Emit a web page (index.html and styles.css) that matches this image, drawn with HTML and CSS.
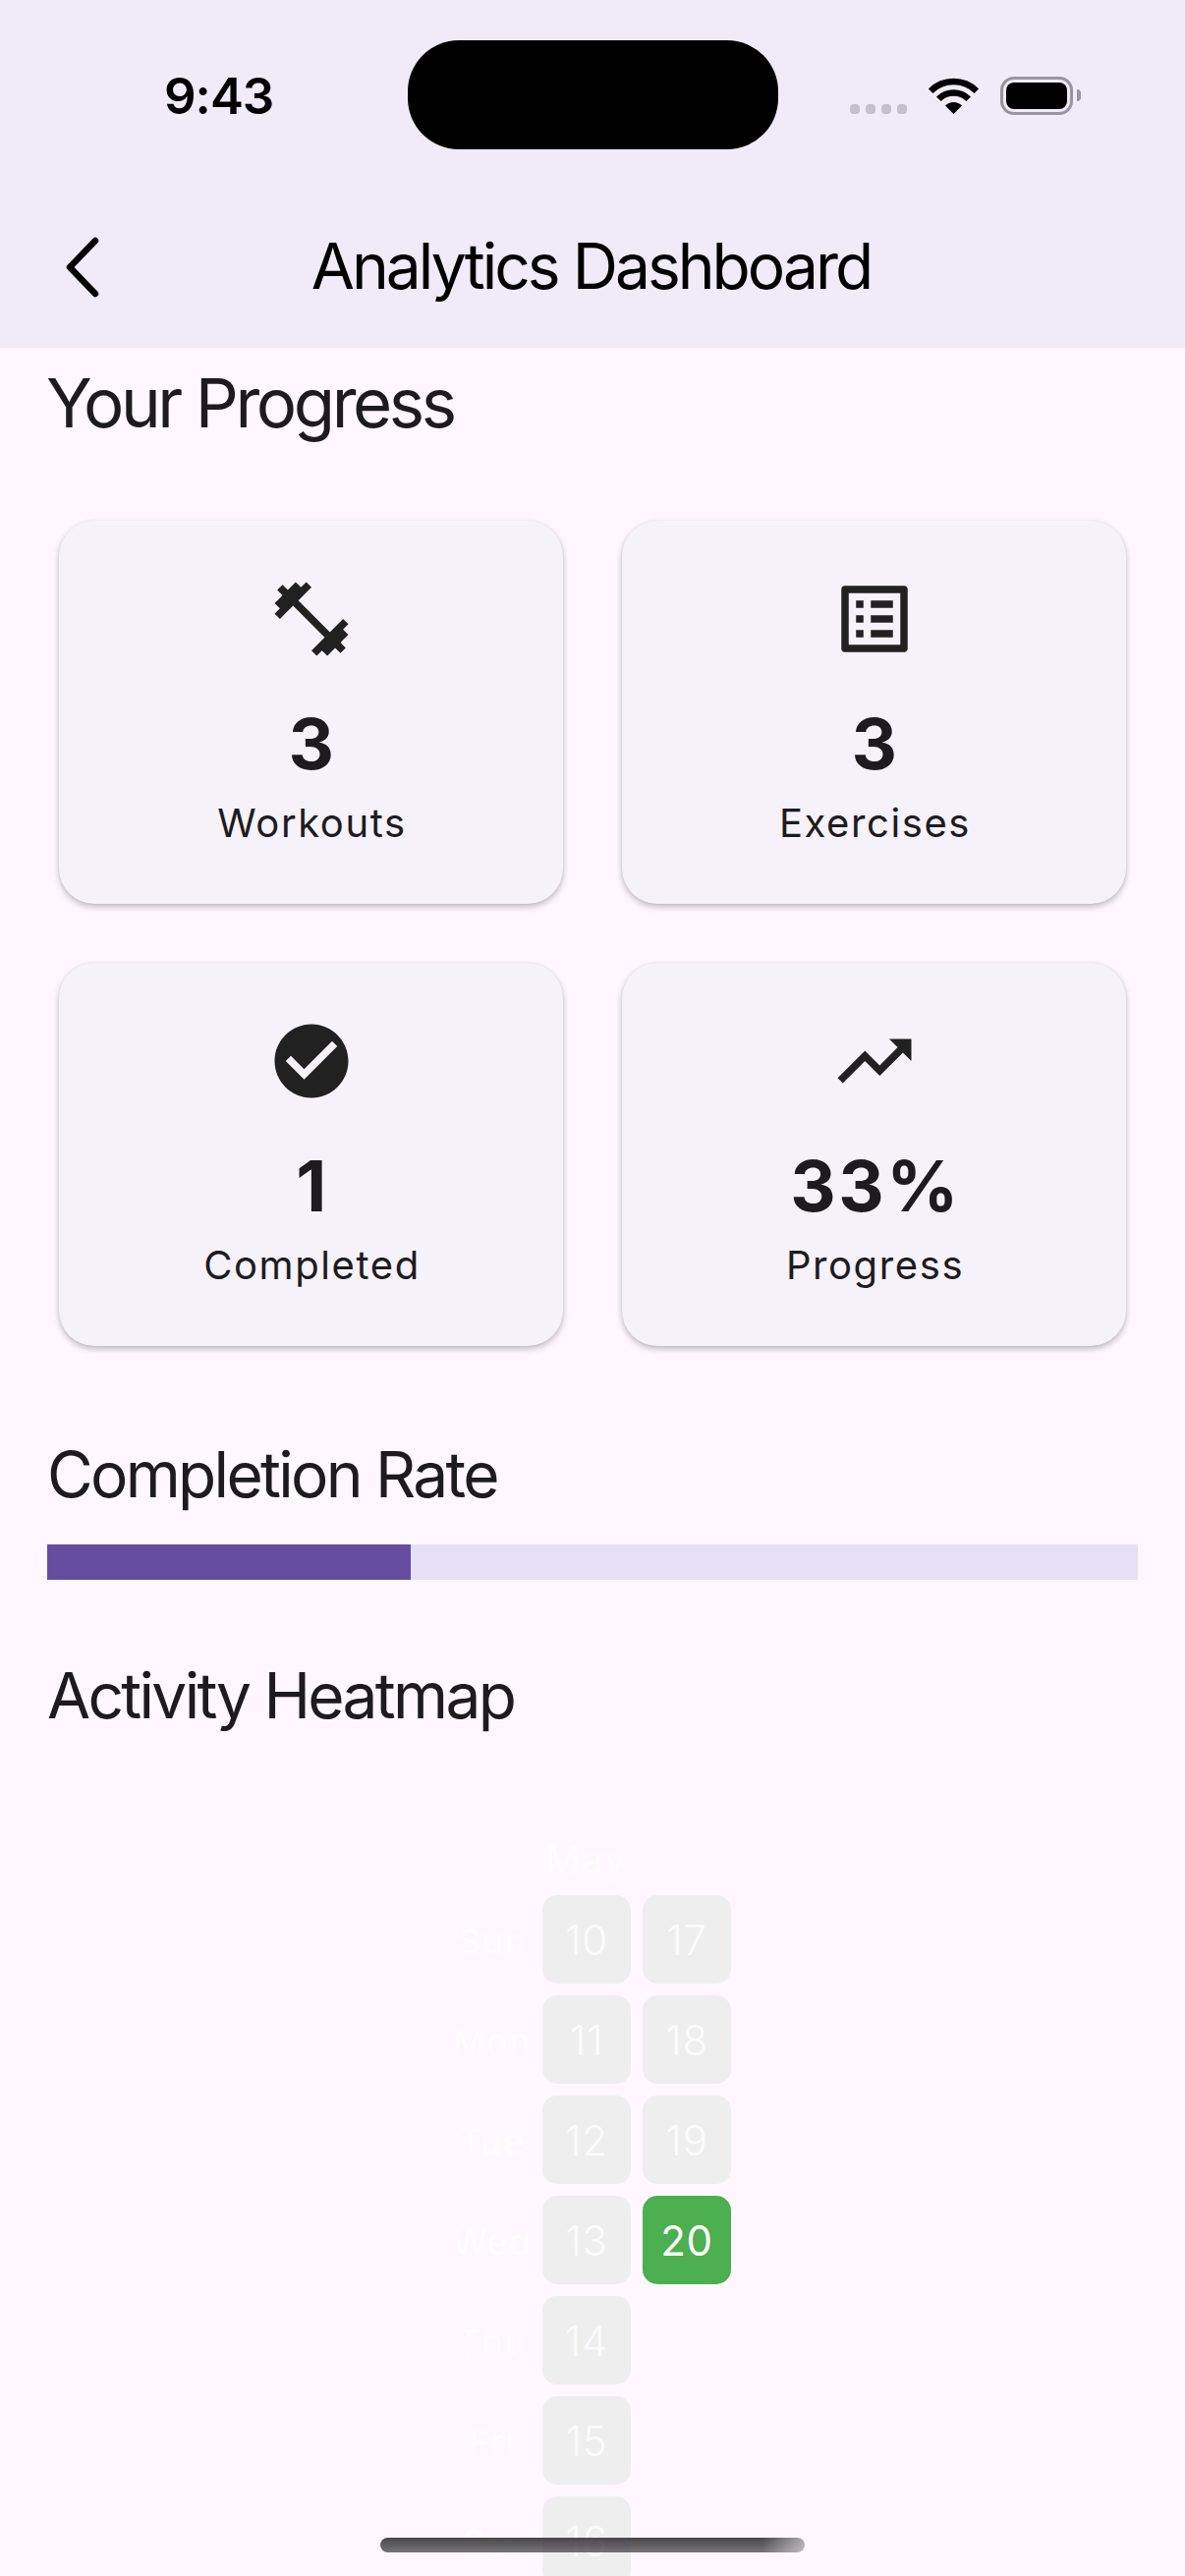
FILE: index.html
```html
<!DOCTYPE html>
<html lang="en">
<head>
<meta charset="utf-8">
<title>Analytics Dashboard</title>
<link rel="stylesheet" href="styles.css">
</head>
<body>
<div class="phone">
  <header class="top">
    <div class="status">
      <span class="clock">9:43</span>
      <div class="status-icons">
        <div class="signal"><i></i><i></i><i></i><i></i></div>
        <svg class="wifi" width="51" height="37" viewBox="0 0 51 37"><path d="M2.2 13.7A33 33 0 0 1 48.8 13.7" fill="none" stroke="#000" stroke-width="6.5"/><path d="M10.3 21.8A21.5 21.5 0 0 1 40.7 21.8" fill="none" stroke="#000" stroke-width="6.5"/><path d="M25.5 37L17 28.5A12 12 0 0 1 34 28.5Z"/></svg>
        <div class="battery"><div class="battery-level"></div></div>
        <div class="battery-nub"></div>
      </div>
    </div>
    <div class="island"></div>
    <div class="appbar">
      <svg class="back" width="40" height="64" viewBox="0 0 40 64"><path d="M31 5L5 32L31 59" fill="none" stroke="#000" stroke-width="6.5" stroke-linecap="round" stroke-linejoin="round"/></svg>
      <h1 class="title">Analytics Dashboard</h1>
    </div>
  </header>
  <main class="content">
    <h2 class="h-large">Your Progress</h2>
    <div class="grid">
      <div class="card">
        <svg class="icon" viewBox="0 0 24 24"><path d="M20.57 14.86L22 13.43 20.57 12 17 15.57 8.43 7 12 3.43 10.57 2 9.14 3.43 7.71 2 5.57 4.14 4.14 2.71 2.71 4.14l1.43 1.43L2 7.71l1.43 1.43L2 10.57 3.43 12 7 8.43 15.57 17 12 20.57 13.43 22l1.43-1.43L16.29 22l2.14-2.14 1.43 1.43 1.43-1.43-1.43-1.43L22 16.29z"/></svg>
        <div class="num">3</div>
        <div class="label">Workouts</div>
      </div>
      <div class="card">
        <svg class="icon" viewBox="0 0 24 24"><path d="M19 5v14H5V5h14m1.1-2H3.9c-.5 0-.9.4-.9.9v16.2c0 .4.4.9.9.9h16.2c.4 0 .9-.5.9-.9V3.9c0-.5-.5-.9-.9-.9zM11 7h6v2h-6V7zm0 4h6v2h-6v-2zm0 4h6v2h-6zM7 7h2v2H7zm0 4h2v2H7zm0 4h2v2H7z"/></svg>
        <div class="num">3</div>
        <div class="label">Exercises</div>
      </div>
      <div class="card">
        <svg class="icon" viewBox="0 0 24 24"><path d="M12 2C6.48 2 2 6.48 2 12s4.48 10 10 10 10-4.48 10-10S17.52 2 12 2zm-2 15l-5-5 1.41-1.41L10 14.17l7.59-7.59L19 8l-9 9z"/></svg>
        <div class="num">1</div>
        <div class="label">Completed</div>
      </div>
      <div class="card">
        <svg class="icon" viewBox="0 0 24 24"><path d="M16 6l2.29 2.29-4.88 4.88-4-4L2 16.59 3.41 18l6-6 4 4 6.3-6.29L22 12V6z"/></svg>
        <div class="num">33%</div>
        <div class="label">Progress</div>
      </div>
    </div>
    <h2 class="h-medium h-rate">Completion Rate</h2>
    <div class="track"><div class="fill"></div></div>
    <h2 class="h-medium h-heat">Activity Heatmap</h2>
    <div class="heatmap">
      <div class="days">
        <span>Sun</span><span>Mon</span><span>Tue</span><span>Wed</span><span>Thu</span><span>Fri</span><span>Sat</span>
      </div>
      <div class="weeks">
        <div class="month">May</div>
        <div class="cells">
          <span class="cell">10</span><span class="cell">17</span>
          <span class="cell">11</span><span class="cell">18</span>
          <span class="cell">12</span><span class="cell">19</span>
          <span class="cell">13</span><span class="cell active">20</span>
          <span class="cell">14</span><span></span>
          <span class="cell">15</span><span></span>
          <span class="cell">16</span><span></span>
        </div>
      </div>
    </div>
  </main>
  <div class="home"></div>
</div>
</body>
</html>
```
FILE: styles.css
```css
* { box-sizing: border-box; margin: 0; padding: 0; }
html, body { width: 1206px; height: 2622px; overflow: hidden; }
body { background: #fef7ff; font-family: Inter, "Liberation Sans", sans-serif; color: #1d1b20; }
.phone { position: relative; width: 1206px; height: 2622px; overflow: hidden; }

.top { position: relative; height: 354px; background: #f1eaf7; }
.status { display: flex; justify-content: space-between; height: 198px; padding: 67px 0 0 167px; }
.clock { font-size: 51px; line-height: 62px; font-weight: 600; color: #000; letter-spacing: -1px; }
.status-icons { display: flex; align-items: flex-start; padding: 12px 106px 0 0; }
.signal { display: flex; gap: 6px; margin: 27px 22px 0 0; }
.signal i { width: 10px; height: 10px; border-radius: 4px; background: #c5bfca; }
.wifi { margin-right: 22px; }
.battery { width: 74px; height: 39px; margin-top: -1px; border: 3px solid #9a949e; border-radius: 14px; padding: 3px; }
.battery-level { height: 100%; border-radius: 8px; background: #000; }
.battery-nub { width: 4px; height: 12px; margin: 12px 0 0 4px; border-radius: 0 4px 4px 0; background: #9a949e; }
.island { position: absolute; left: 415px; top: 41px; width: 377px; height: 111px; border-radius: 52px; background: #000; }
.appbar { position: relative; display: flex; justify-content: center; height: 156px; }
.back { position: absolute; left: 66px; top: 42px; }
.title { font-size: 64px; line-height: 80px; font-weight: 400; color: #000; letter-spacing: -2.95px; padding: 33px 3px 0 0; }

.content { padding: 11px 48px 0; }
.h-large { margin-left: -1px; font-size: 69px; line-height: 90px; font-weight: 400; letter-spacing: -3.45px; }
.h-medium { font-size: 64px; line-height: 84px; font-weight: 400; letter-spacing: -2.7px; }
.grid { display: grid; grid-template-columns: 537px 537px; gap: 36px; margin-top: 63px; }
.card { display: flex; flex-direction: column; align-items: center; height: 390px; margin: 12px; padding-top: 55px; border-radius: 36px; background: #f6f2f9; box-shadow: 0 3px 6px rgba(0,0,0,.25), 0 0 2px rgba(0,0,0,.07); }
.icon { width: 90px; height: 90px; fill: #212121; display: block; }
.num { margin-top: 38px; padding-left: 3px; font-size: 72px; line-height: 88px; font-weight: 700; letter-spacing: 2.5px; }
.label { margin-top: 12px; padding-left: 2px; font-size: 40px; line-height: 50px; letter-spacing: 1.6px; }

.h-rate { margin-top: 77px; }
.track { height: 36px; margin-top: 29px; background: #e6dff6; }
.fill { width: 370px; height: 100%; background: #654ea0; }
.h-heat { margin-top: 76px; }

.heatmap { display: flex; justify-content: center; margin-top: 104px; }
.days { display: flex; flex-direction: column; align-items: center; width: 78px; margin-right: 12px; padding-top: 57px; }
.days span { height: 102px; font-size: 36px; line-height: 94px; letter-spacing: 1.5px; color: #fffcff; }
.weeks { display: flex; flex-direction: column; }
.month { height: 57px; font-size: 39px; line-height: 41px; padding-left: 3px; letter-spacing: 1.6px; color: #fffcff; }
.cells { display: grid; grid-template-columns: 90px 90px; grid-auto-rows: 90px; gap: 12px; }
.cell { display: flex; align-items: center; justify-content: center; border-radius: 15px; background: #eeeeee; color: #fbfbfb; font-size: 42px; font-weight: 300; letter-spacing: .8px; }
.active { background: #4caf50; color: #fff; font-weight: 400; }

.home { position: absolute; left: 387px; top: 2583px; width: 432px; height: 15px; border-radius: 8px; background: linear-gradient(to right, rgba(254,247,255,0) 90%, rgba(254,247,255,.55) 100%), linear-gradient(to bottom, rgba(50,46,52,.88), rgba(80,76,82,.78)); }
```
